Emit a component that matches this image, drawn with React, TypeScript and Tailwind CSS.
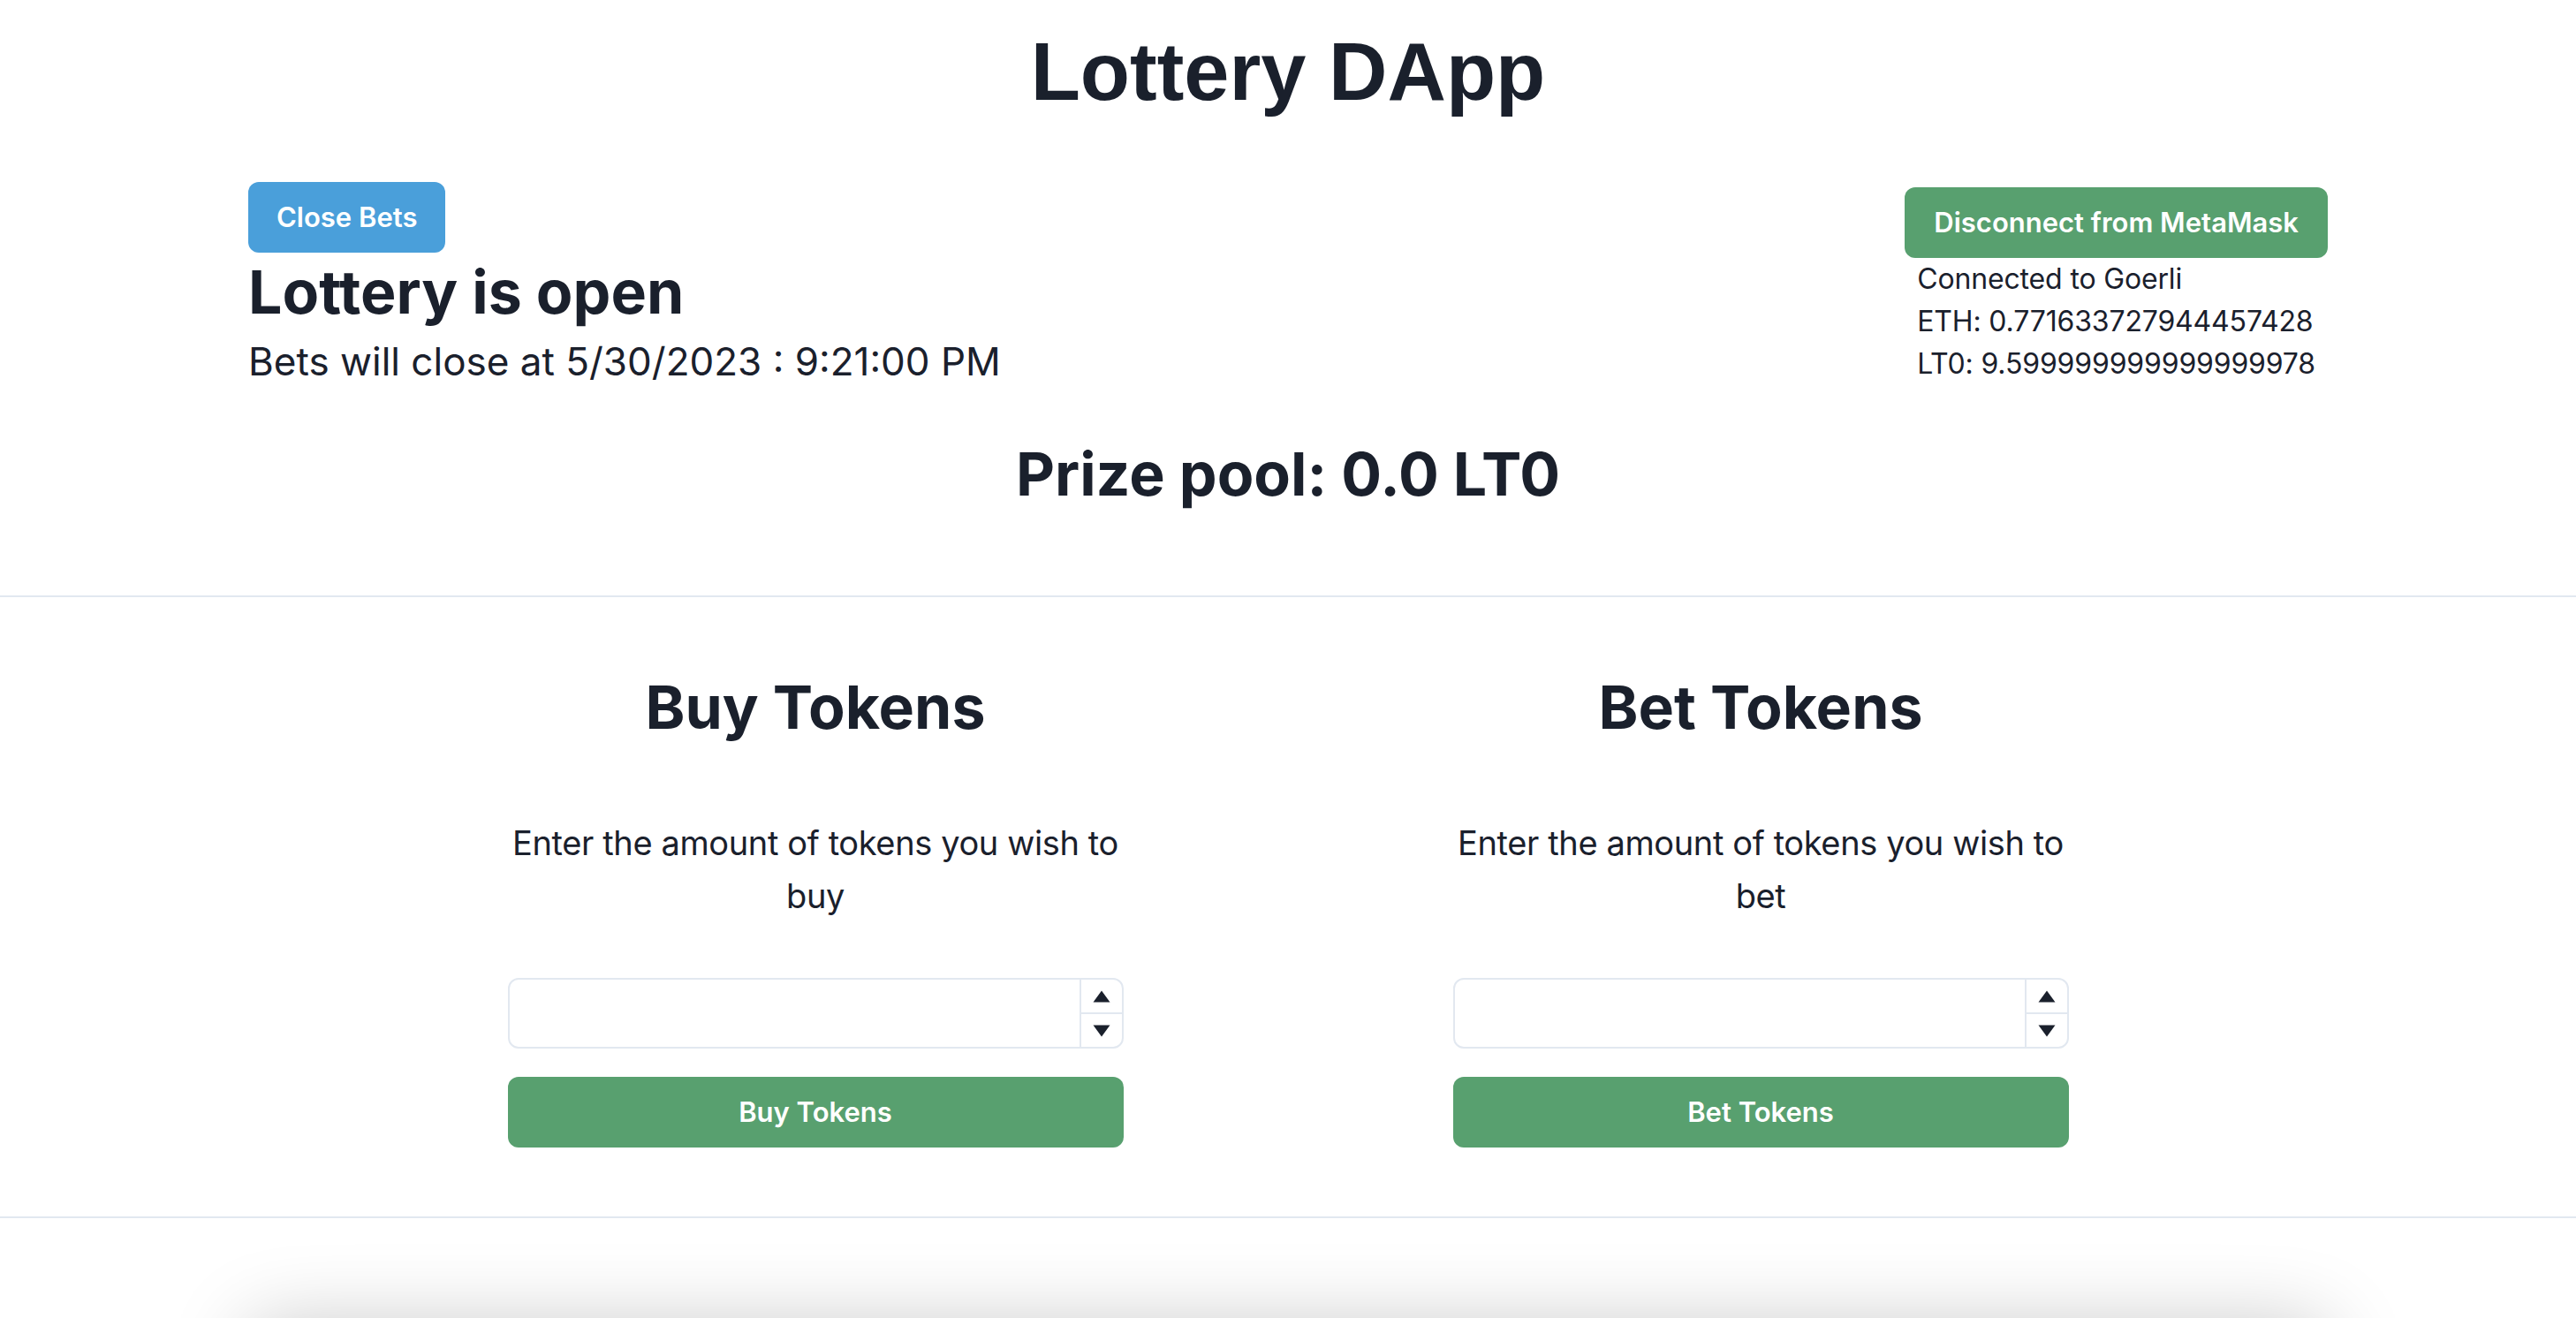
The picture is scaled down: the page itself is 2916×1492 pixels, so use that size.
import React from "react";

const TriangleUp = () => (
  <svg viewBox="0 0 20 14" className="h-[14px] w-[20px] fill-[#1A202C]">
    <path d="M10 0.5 L19.5 13.5 H0.5 Z" />
  </svg>
);

const TriangleDown = () => (
  <svg viewBox="0 0 20 14" className="h-[14px] w-[20px] fill-[#1A202C]">
    <path d="M0.5 0.5 H19.5 L10 13.5 Z" />
  </svg>
);

const TokenForm = ({ title, prompt, action }: { title: string; prompt: string; action: string }) => {
  return (
    <div className="flex flex-col items-center">
      <h2 className="text-[68px] leading-[1.2] font-bold">{title}</h2>
      <div className="mt-[83px] w-[697px]">
        <p className="text-center text-[38px] leading-[60px] tracking-[-0.01em]">{prompt}</p>
        <div className="mt-[63px] flex h-[80px] rounded-[12px] border-2 border-[#E2E8F0]">
          <input type="number" className="min-w-0 flex-1 bg-transparent px-[32px] text-[32px] outline-none [appearance:textfield] [&::-webkit-inner-spin-button]:appearance-none" />
          <div className="flex w-[48px] flex-col border-l-2 border-[#E2E8F0]">
            <div className="flex flex-1 items-center justify-center">
              <TriangleUp />
            </div>
            <div className="flex flex-1 items-center justify-center border-t-2 border-[#E2E8F0]">
              <TriangleDown />
            </div>
          </div>
        </div>
        <button className="mt-[32px] h-[80px] w-full rounded-[12px] bg-[#58A06F] text-[31px] font-semibold text-white">
          {action}
        </button>
      </div>
    </div>
  );
};

export default function App() {
  return (
    <div className="min-h-screen overflow-hidden bg-white font-['Inter',sans-serif] text-[#1A202C]">
      <h1 className="pt-[26px] text-center font-['Liberation_Sans',Arial,sans-serif] text-[92px] leading-[1.2] font-bold">
        Lottery DApp
      </h1>

      <div className="mx-auto mt-[70px] flex w-[2354px] items-center justify-between">
        <div className="flex flex-col items-start">
          <button className="h-[80px] rounded-[12px] bg-[#4A9FDA] px-[32px] text-[31px] font-semibold text-white">
            Close Bets
          </button>
          <h2 className="mt-[4px] text-[68px] leading-[1.2] font-bold">Lottery is open</h2>
          <p className="mt-[4px] text-[44px] leading-[66px]">Bets will close at 5/30/2023 : 9:21:00 PM</p>
        </div>
        <div className="flex flex-col items-center">
          <button className="h-[80px] rounded-[12px] bg-[#58A06F] px-[33px] text-[31px] font-semibold text-white">
            Disconnect from MetaMask
          </button>
          <div className="text-[32px] leading-[48px] tracking-[-0.005em]">
            <p>Connected to Goerli</p>
            <p>ETH: 0.771633727944457428</p>
            <p>LT0: 9.599999999999999978</p>
          </div>
        </div>
      </div>

      <h2 className="mt-[54px] text-center text-[68px] leading-[1.2] font-bold">Prize pool: 0.0 LT0</h2>

      <div className="mt-[96px] border-t-2 border-[#E2E8F0]">
        <div className="mx-auto grid w-[2140px] grid-cols-2 pt-[84px] pb-[78px]">
          <TokenForm title="Buy Tokens" prompt="Enter the amount of tokens you wish to buy" action="Buy Tokens" />
          <TokenForm title="Bet Tokens" prompt="Enter the amount of tokens you wish to bet" action="Bet Tokens" />
        </div>
      </div>

      <div className="border-t-2 border-[#E2E8F0] pt-[120px]">
        <div className="mx-auto h-[400px] w-[2354px] rounded-[24px] bg-white shadow-[0_0_90px_rgba(0,0,0,0.22)]" />
      </div>
    </div>
  );
}
